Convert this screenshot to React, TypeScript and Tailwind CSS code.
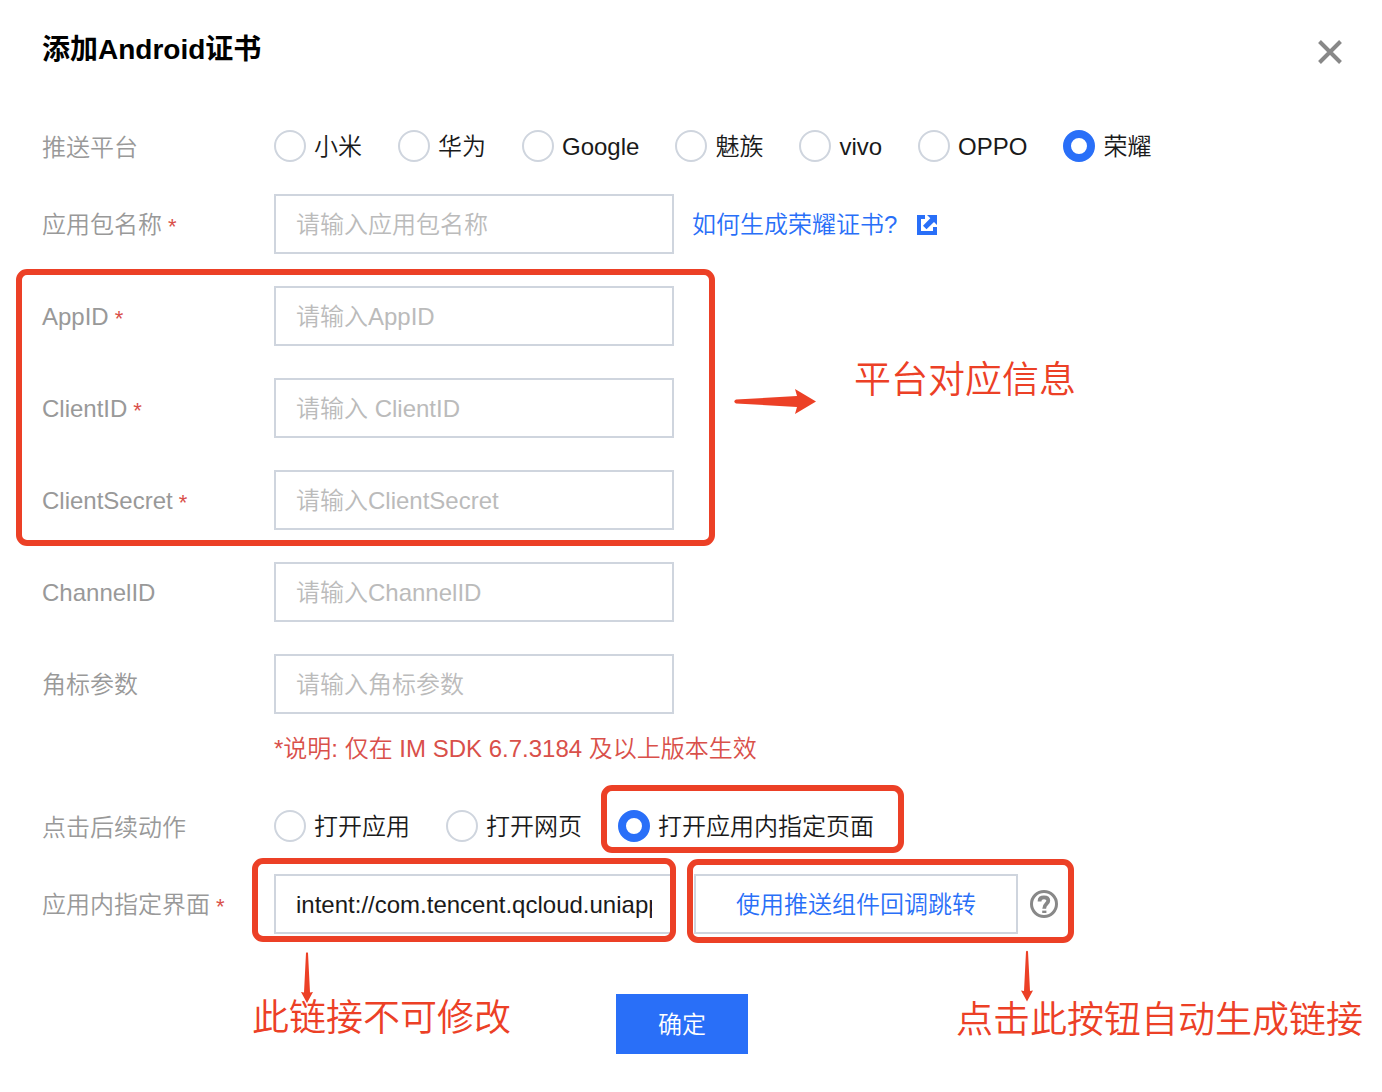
import type { ReactNode } from 'react';

const platforms = ['小米', '华为', 'Google', '魅族', 'vivo', 'OPPO', '荣耀'];

function FieldLabel({ htmlFor, required, children }: { htmlFor?: string; required?: boolean; children: ReactNode }) {
  return (
    <label htmlFor={htmlFor} className="flex w-[232px] shrink-0 items-center gap-[6px] pt-[2px] text-[#999999]">
      {children}
      {required && <span className="pt-1 text-[22px] text-[#d9504a]">*</span>}
    </label>
  );
}

function GroupLabel({ id, children }: { id: string; children: ReactNode }) {
  return (
    <span id={id} className="w-[232px] shrink-0 pt-1 text-[#999999]">
      {children}
    </span>
  );
}

function TextField({
  id,
  label,
  placeholder,
  required,
  children,
}: {
  id: string;
  label: string;
  placeholder: string;
  required?: boolean;
  children?: ReactNode;
}) {
  return (
    <div className="flex items-center">
      <FieldLabel htmlFor={id} required={required}>
        {label}
      </FieldLabel>
      <input
        id={id}
        type="text"
        placeholder={placeholder}
        className="h-[60px] w-[400px] border-2 border-[#cfd5de] bg-white px-5 pt-[2px] outline-none placeholder:text-[#bbbbbb]"
      />
      {children}
    </div>
  );
}

function Radio({ name, label, checked }: { name: string; label: string; checked?: boolean }) {
  return (
    <label className="flex h-8 items-center gap-2 whitespace-nowrap">
      <input
        type="radio"
        name={name}
        defaultChecked={checked}
        className="size-8 shrink-0 appearance-none rounded-full border-2 border-[#cfd5de] bg-white checked:border-8 checked:border-[#296ff8]"
      />
      <span className="pt-[2px]">{label}</span>
    </label>
  );
}

function DownArrow({ className }: { className: string }) {
  return (
    <svg viewBox="0 0 12 52" className={className} fill="#ec4026" aria-hidden="true">
      <path d="M5 1Q6 -0.5 7 1L9 40.5L12 40L6 51L0 40L3 40.5Z" />
    </svg>
  );
}

export default function App() {
  return (
    <div className="overflow-x-hidden bg-white pt-8 pr-10 pb-[38px] pl-[42px] font-['Liberation_Sans','Noto_Sans_CJK_SC',sans-serif] text-[24px] leading-8 font-[350] text-[#1a1a1a]">
      <header className="flex h-9 items-center justify-between">
        <h1 className="text-[28px] leading-8 font-bold text-black">添加Android证书</h1>
        <button type="button" aria-label="关闭" className="pt-1">
          <svg viewBox="0 0 24 24" className="size-6" stroke="#888888" strokeWidth="4" fill="none">
            <path d="M1.5 1.5L22.5 22.5M22.5 1.5L1.5 22.5" />
          </svg>
        </button>
      </header>

      <form className="mt-[62px]">
        <div className="flex flex-col gap-8">
          <div role="radiogroup" aria-labelledby="platform-label" className="flex h-8 items-center">
            <GroupLabel id="platform-label">推送平台</GroupLabel>
            <div className="flex gap-9">
              {platforms.map((name) => (
                <Radio key={name} name="platform" label={name} checked={name === '荣耀'} />
              ))}
            </div>
          </div>

          <TextField id="package" label="应用包名称" placeholder="请输入应用包名称" required>
            <a href="#" className="ml-[18px] flex items-center gap-5 pt-[2px] text-[#296ff8]">
              如何生成荣耀证书?
              <svg viewBox="0 0 20 20" className="size-5" fill="#296ff8" aria-hidden="true">
                <path d="M0 0H8V4H4V16H16V12H20V20H0Z" />
                <path d="M10 0H20V10L17 7L9.5 14.2L6 10.8L13.3 3.3Z" />
              </svg>
            </a>
          </TextField>

          {/* Platform credentials */}
          <div className="relative flex w-[632px] flex-col gap-8">
            <TextField id="appId" label="AppID" placeholder="请输入AppID" required />
            <TextField id="clientId" label="ClientID" placeholder="请输入 ClientID" required />
            <TextField id="clientSecret" label="ClientSecret" placeholder="请输入ClientSecret" required />
            <div className="pointer-events-none absolute -top-[17px] -right-[41px] -bottom-4 -left-[26px] rounded-[11px] border-6 border-[#ec4026]" />
            <svg
              viewBox="0 0 82 25"
              className="absolute top-[103px] left-[692px] h-[25px] w-[82px]"
              fill="#ec4026"
              aria-hidden="true"
            >
              <path d="M2 10.5L63 7L61 0L82 12.5L61 25L63 18L2 14.5Q-1.5 12.5 2 10.5Z" />
            </svg>
            <p className="absolute top-[75px] left-[812px] text-[37px] leading-10 whitespace-nowrap text-[#ec4026]">
              平台对应信息
            </p>
          </div>

          <TextField id="channelId" label="ChannelID" placeholder="请输入ChannelID" />
          <TextField id="badge" label="角标参数" placeholder="请输入角标参数" />
        </div>

        <p className="mt-[19px] ml-[232px] text-[#d9504a]">*说明: 仅在 IM SDK 6.7.3184 及以上版本生效</p>

        <div role="radiogroup" aria-labelledby="action-label" className="mt-[45px] flex h-8 items-center">
          <GroupLabel id="action-label">点击后续动作</GroupLabel>
          <div className="flex gap-9">
            <Radio name="action" label="打开应用" />
            <Radio name="action" label="打开网页" />
            <div className="relative">
              <Radio name="action" label="打开应用内指定页面" checked />
              <div className="pointer-events-none absolute -top-[25px] -right-[30px] -bottom-[11px] -left-[17px] rounded-[11px] border-6 border-[#ec4026]" />
            </div>
          </div>
        </div>

        <div className="mt-8 flex items-center">
          <FieldLabel htmlFor="intent" required>
            应用内指定界面
          </FieldLabel>
          <div className="relative">
            <input
              id="intent"
              type="text"
              readOnly
              defaultValue="intent://com.tencent.qcloud.uniapp"
              className="block h-[60px] w-[400px] border-2 border-[#cfd5de] bg-white px-5 pt-[2px] outline-none"
            />
            <div className="pointer-events-none absolute -top-4 -right-[2px] -bottom-2 -left-[22px] rounded-[11px] border-6 border-[#ec4026]" />
            <DownArrow className="absolute top-[78px] left-[27px] h-[52px] w-3" />
            <p className="absolute top-[125px] -left-[22px] text-[37px] leading-10 whitespace-nowrap text-[#ec4026]">
              此链接不可修改
            </p>
          </div>
          <div className="relative ml-5 flex items-center gap-3">
            <button type="button" className="h-[60px] w-[324px] border-2 border-[#cfd5de] pt-[2px] text-[#296ff8]">
              使用推送组件回调跳转
            </button>
            <button type="button" aria-label="帮助">
              <svg viewBox="0 0 28 28" className="size-7" fill="none" stroke="#888888">
                <circle cx="14" cy="14" r="12.5" strokeWidth="3" />
                <path d="M9.6 11.4V10.8C9.6 8.5 11.4 7.3 14 7.3C16.8 7.3 18.3 8.6 18.3 10.8C18.3 13.8 14.2 13.8 14.2 18.8" strokeWidth="3.8" />
                <path d="M12.2 21.8H16.4" strokeWidth="2.4" />
              </svg>
            </button>
            <div className="pointer-events-none absolute -top-[15px] -right-4 -bottom-[9px] -left-[7px] rounded-[11px] border-6 border-[#ec4026]" />
            <DownArrow className="absolute top-[75px] left-[327px] h-[55px] w-3" />
            <p className="absolute top-[127px] left-[262px] text-[37px] leading-10 whitespace-nowrap text-[#ec4026]">
              点击此按钮自动生成链接
            </p>
          </div>
        </div>

        <div className="mt-[60px] flex justify-center pr-5">
          <button type="button" className="h-[60px] w-[132px] bg-[#296ff8] pt-[2px] text-white">
            确定
          </button>
        </div>
      </form>
    </div>
  );
}
